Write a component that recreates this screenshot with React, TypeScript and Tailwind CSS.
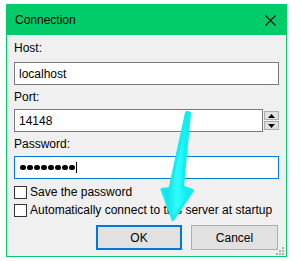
import React from 'react';

const font = { fontFamily: '"Liberation Sans", Arial, sans-serif' };

function Field({ label, value, mt }: { label: string; value: string; mt: string }) {
  return (
    <>
      <div className={`${mt} h-[16px] text-[12px] leading-[16px]`}>{label}</div>
      <div className="mt-[6px] flex h-[23px] items-center border border-[#7a7a7a] bg-white pl-[4px] text-[12px]">
        {value}
      </div>
    </>
  );
}

function CheckRow({ label }: { label: string }) {
  return (
    <div className="flex h-[18px] items-start">
      <div className="mt-[2px] h-[13px] w-[13px] border border-[#333] bg-white" />
      <span className="ml-[3px] text-[12px] leading-[16px]">{label}</span>
    </div>
  );
}

function Arrow() {
  return (
    <svg className="pointer-events-none absolute left-0 top-0" width="301" height="261">
      <defs>
        <linearGradient id="cy" x1="0" y1="0" x2="1" y2="0">
          <stop offset="0" stopColor="#00d8e0" />
          <stop offset="0.5" stopColor="#30fcfc" />
          <stop offset="1" stopColor="#00e4ea" />
        </linearGradient>
      </defs>
      <path
        d="M186.5 112.5 L189.5 113 L182.5 187 L192.5 190.5 L173 219.5 L162 189.5 L170 188.5 Z"
        fill="url(#cy)"
        stroke="#10eef0"
        strokeWidth="3"
        strokeLinejoin="round"
      />
    </svg>
  );
}

export default function App() {
  return (
    <div className="relative h-[261px] w-[301px] bg-white pl-[6px] pt-[4px] text-black" style={font}>
      <div className="relative flex h-[253px] w-[281px] flex-col border border-[#00cc6a] bg-[#f0f0f0]">
        {/* barre de titre */}
        <div className="flex h-[30px] items-center justify-between bg-[#00cc6a] pl-[8px] pr-[10px]">
          <span className="text-[12px]">Connection</span>
          <svg width="11" height="11" viewBox="0 0 11 11">
            <path d="M0.5 0.5 L10.5 10.5 M10.5 0.5 L0.5 10.5" stroke="#111" strokeWidth="1.1" />
          </svg>
        </div>

        <div className="flex flex-col px-[7px]">
          <Field label="Host:" value="localhost" mt="mt-[5px]" />

          <div className="mt-[4px] h-[16px] text-[12px] leading-[16px]">Port:</div>
          <div className="mt-[4px] flex h-[23px]">
            <div className="flex w-[249px] items-center border border-[#7a7a7a] bg-white pl-[4px] text-[12px]">
              14148
            </div>
            <div className="ml-[1px] mt-[2px] flex w-[15px] flex-col gap-[1px]">
              <div className="flex h-[9px] items-center justify-center border border-[#adadad] bg-[#e1e1e1]">
                <svg width="7" height="4"><path d="M0 4 L3.5 0 L7 4 Z" fill="#000" /></svg>
              </div>
              <div className="flex h-[9px] items-center justify-center border border-[#adadad] bg-[#e1e1e1]">
                <svg width="7" height="4"><path d="M0 0 L3.5 4 L7 0 Z" fill="#000" /></svg>
              </div>
            </div>
          </div>

          <div className="mt-[4px] h-[16px] text-[12px] leading-[16px]">Password:</div>
          <div className="mt-[4px] flex h-[23px] items-center border border-[#0078d7] bg-white pl-[5px]">
            <div className="flex gap-[1.5px]">
              {Array.from({ length: 8 }).map((_, i) => (
                <div key={i} className="h-[5.5px] w-[5.5px] rounded-full bg-black" />
              ))}
            </div>
            <div className="ml-[1px] h-[11px] w-[1px] bg-black" />
          </div>

          <div className="mt-[5px] flex flex-col">
            <CheckRow label="Save the password" />
            <CheckRow label="Automatically connect to this server at startup" />
          </div>

          <div className="mr-[1px] mt-[5px] flex justify-end gap-[9px]">
            <button className="h-[25px] w-[86px] border-2 border-[#0078d7] bg-[#e1e1e1] text-[12px]">OK</button>
            <button className="h-[25px] w-[87px] border border-[#adadad] bg-[#e1e1e1] text-[12px]">Cancel</button>
          </div>
        </div>

        {/* poignée de redimensionnement */}
        <svg className="absolute bottom-[1px] right-[2px]" width="9" height="9">
          {[[7, 1], [4, 4], [7, 4], [1, 7], [4, 7], [7, 7]].map(([x, y], i) => (
            <rect key={i} x={x} y={y} width="2" height="2" fill="#b0b0b0" />
          ))}
        </svg>
      </div>
      <Arrow />
    </div>
  );
}
